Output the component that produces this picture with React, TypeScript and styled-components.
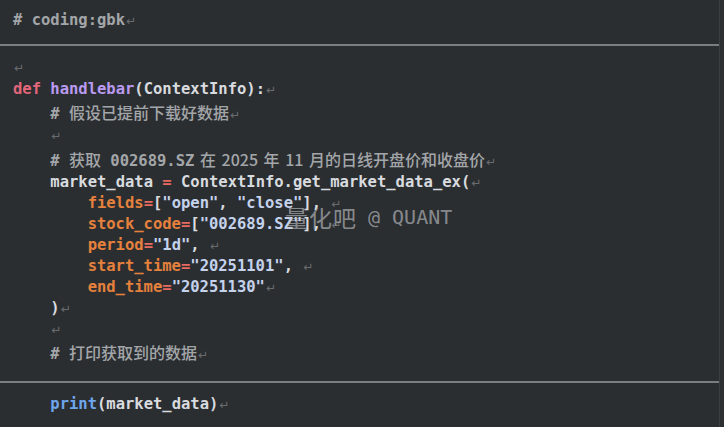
import React from "react";
import styled, { createGlobalStyle } from "styled-components";

const Global = createGlobalStyle`
  html, body { margin: 0; padding: 0; background: #2b2e31; }
  #root { width: 724px; height: 427px; overflow: hidden; }
`;

type Kind = "txt" | "kw" | "fn" | "cm" | "pm" | "st" | "op" | "bi" | "cjk";

const colors: Record<Kind, string> = {
  txt: "#d8dbdf",
  kw: "#e3677a",
  fn: "#b99af0",
  cm: "#a3a6a9",
  pm: "#e5813d",
  st: "#c4d2ec",
  op: "#e86b62",
  bi: "#6ea6ec",
  cjk: "#a3a6a9",
};

const Page = styled.div`
  display: flex;
  width: 724px;
  height: 427px;
  background: #2b2e31;
  position: relative;
`;

const Editor = styled.div`
  width: 719px;
  border-right: 1px solid #3b3e41;
  display: flex;
  flex-direction: column;
`;

const Gutter = styled.div`
  flex: 1;
  background: #2d3033;
`;

const Section = styled.div<{ $pt: number; $pb: number }>`
  padding: ${(p) => p.$pt}px 0 ${(p) => p.$pb}px 13px;
`;

const Divider = styled.div`
  height: 2px;
  background: #7a7e81;
`;

const Line = styled.div<{ $indent: number; $h: number }>`
  height: ${(p) => p.$h}px;
  line-height: ${(p) => p.$h}px;
  white-space: pre;
  font-family: "DejaVu Sans Mono", "Noto Sans CJK SC", monospace;
  font-size: 15.5px;
  padding-left: ${(p) => p.$indent * 9.33}px;
  color: #d8dbdf;
`;

const Tok = styled.span<{ $k: Kind }>`
  color: ${(p) => colors[p.$k]};
  font-family: ${(p) =>
    p.$k === "cjk"
      ? `"Noto Sans CJK SC", sans-serif`
      : `"DejaVu Sans Mono", "Noto Sans CJK SC", monospace`};
  font-size: ${(p) => (p.$k === "cjk" ? 16 : 15.5)}px;
  font-weight: ${(p) => (p.$k === "cjk" ? 500 : 600)};
  word-spacing: ${(p) => (p.$k === "cjk" ? 2 : 0)}px;
`;

const Ret = styled.span`
  color: #6a6d70;
  font-family: "DejaVu Sans", sans-serif;
  font-size: 12px;
  margin-left: 1px;
`;

const Watermark = styled.div`
  position: absolute;
  left: 285px;
  top: 200px;
  display: flex;
  align-items: center;
  gap: 11px;
  color: rgba(196, 199, 202, 0.62);
  pointer-events: none;
`;

const WmCjk = styled.span`
  font-family: "Noto Sans CJK SC", sans-serif;
  font-size: 23px;
  letter-spacing: 1px;
  font-weight: 400;
`;

const WmLat = styled.span`
  font-family: "DejaVu Sans Mono", monospace;
  font-size: 20px;
`;

type Seg = [string, Kind];
type L = { i: number; s: Seg[]; h: number };

const top: L[] = [{ i: 0, s: [["# coding:gbk", "cm"]], h: 22 }];

const mid: L[] = [
  { i: 0, s: [], h: 22 },
  { i: 0, s: [["def", "kw"], [" ", "txt"], ["handlebar", "fn"], ["(ContextInfo):", "txt"]], h: 23 },
  { i: 4, s: [["# ", "cm"], ["假设已提前下载好数据", "cjk"]], h: 22 },
  { i: 4, s: [], h: 24 },
  {
    i: 4,
    s: [
      ["# ", "cm"],
      ["获取", "cjk"],
      [" 002689.SZ", "cm"],
      [" 在 2025 年 11 月的日线开盘价和收盘价", "cjk"],
    ],
    h: 24,
  },
  {
    i: 4,
    s: [["market_data ", "txt"], ["=", "op"], [" ContextInfo.get_market_data_ex(", "txt"]],
    h: 22,
  },
  {
    i: 8,
    s: [["fields", "pm"], ["=", "op"], ["[", "txt"], ['"open"', "st"], [", ", "txt"], ['"close"', "st"], ["], ", "txt"]],
    h: 21,
  },
  { i: 8, s: [["stock_code", "pm"], ["=", "op"], ["[", "txt"], ['"002689.SZ"', "st"], ["], ", "txt"]], h: 21 },
  { i: 8, s: [["period", "pm"], ["=", "op"], ['"1d"', "st"], [", ", "txt"]], h: 21 },
  { i: 8, s: [["start_time", "pm"], ["=", "op"], ['"20251101"', "st"], [", ", "txt"]], h: 21 },
  { i: 8, s: [["end_time", "pm"], ["=", "op"], ['"20251130"', "st"]], h: 21 },
  { i: 4, s: [[")", "txt"]], h: 21 },
  { i: 4, s: [], h: 21 },
  { i: 4, s: [["# ", "cm"], ["打印获取到的数据", "cjk"]], h: 25 },
];

const bottom: L[] = [{ i: 4, s: [["print", "bi"], ["(market_data)", "txt"]], h: 22 }];

const renderLines = (ls: L[]) =>
  ls.map((l, n) => (
    <Line key={n} $indent={l.i} $h={l.h}>
      {l.s.map((t, k) => (
        <Tok key={k} $k={t[1]}>
          {t[0]}
        </Tok>
      ))}
      <Ret>↵</Ret>
    </Line>
  ));

export default function App() {
  return (
    <>
      <Global />
      <Page>
        <Editor>
          <Section $pt={9} $pb={13}>
            {renderLines(top)}
          </Section>
          <Divider />
          <Section $pt={10} $pb={16}>
            {renderLines(mid)}
          </Section>
          <Divider />
          <Section $pt={10} $pb={0}>
            {renderLines(bottom)}
          </Section>
        </Editor>
        <Gutter />
        <Watermark>
          <WmCjk>量化吧</WmCjk>
          <WmLat>@ QUANT</WmLat>
        </Watermark>
      </Page>
    </>
  );
}
